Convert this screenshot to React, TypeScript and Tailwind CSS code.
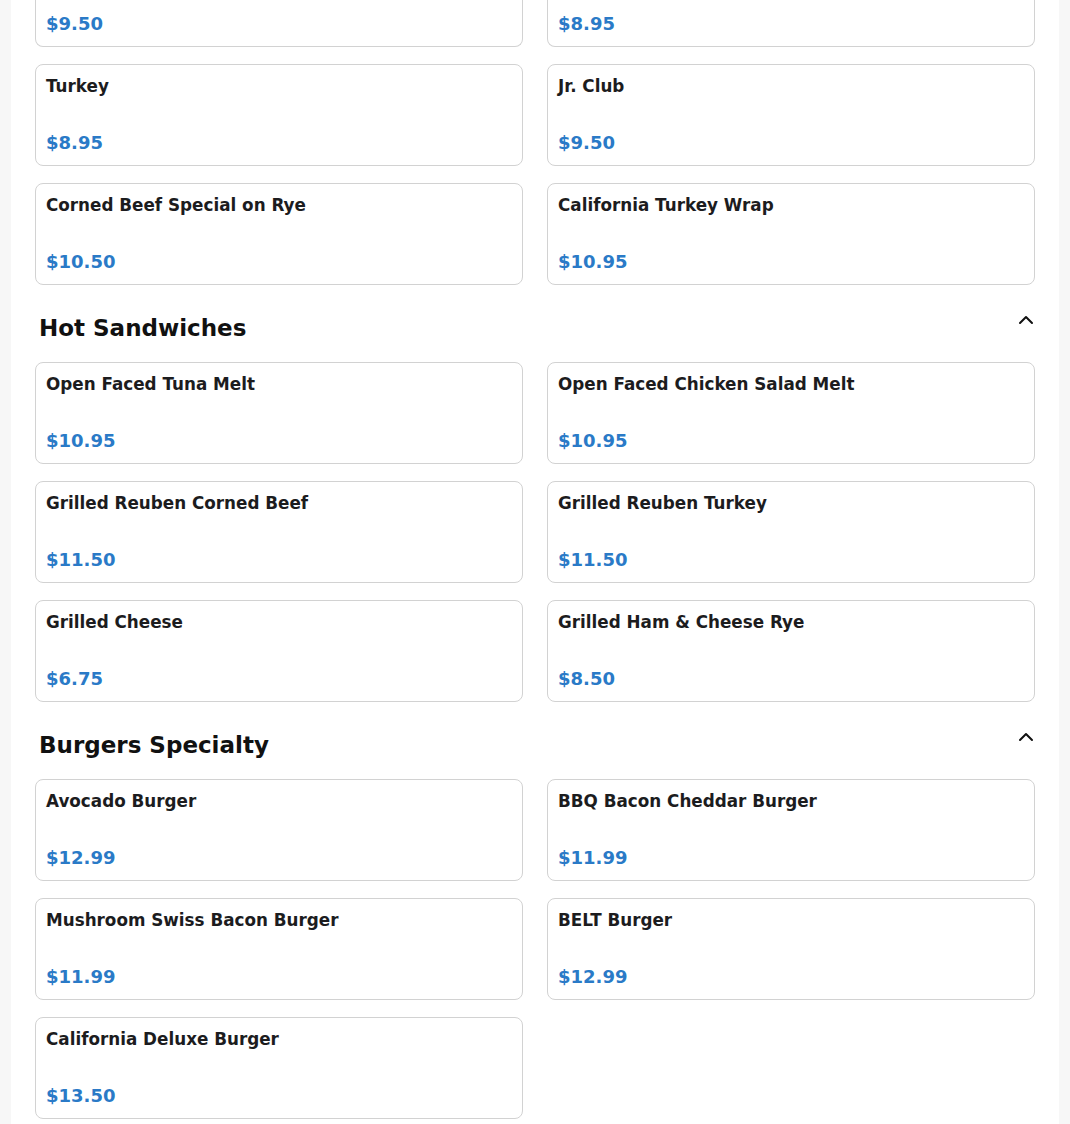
import { ChevronUp } from 'lucide-react';

interface Item {
  name: string;
  price: string;
}

interface Section {
  title?: string;
  items: Item[];
}

// first section is scrolled partly out of view; its heading and first row are cut off
const cutRow: Item[] = [
  { name: '', price: '$9.50' },
  { name: '', price: '$8.95' },
];

const sections: Section[] = [
  {
    items: [
      { name: 'Turkey', price: '$8.95' },
      { name: 'Jr. Club', price: '$9.50' },
      { name: 'Corned Beef Special on Rye', price: '$10.50' },
      { name: 'California Turkey Wrap', price: '$10.95' },
    ],
  },
  {
    title: 'Hot Sandwiches',
    items: [
      { name: 'Open Faced Tuna Melt', price: '$10.95' },
      { name: 'Open Faced Chicken Salad Melt', price: '$10.95' },
      { name: 'Grilled Reuben Corned Beef', price: '$11.50' },
      { name: 'Grilled Reuben Turkey', price: '$11.50' },
      { name: 'Grilled Cheese', price: '$6.75' },
      { name: 'Grilled Ham & Cheese Rye', price: '$8.50' },
    ],
  },
  {
    title: 'Burgers Specialty',
    items: [
      { name: 'Avocado Burger', price: '$12.99' },
      { name: 'BBQ Bacon Cheddar Burger', price: '$11.99' },
      { name: 'Mushroom Swiss Bacon Burger', price: '$11.99' },
      { name: 'BELT Burger', price: '$12.99' },
      { name: 'California Deluxe Burger', price: '$13.50' },
    ],
  },
];

function Price({ value }: { value: string }) {
  return <p className="text-[18px] leading-[27px] font-bold text-[#2a7ac7]">{value}</p>;
}

function MenuCard({ item }: { item: Item }) {
  return (
    <div className="h-[102px] flex flex-col justify-between bg-white border border-[#d2d2d2] rounded-lg px-[10px] pt-[9px] pb-[9px]">
      <p className="text-[16.8px] leading-[25px] font-bold text-[#1c1c1e]">{item.name}</p>
      <Price value={item.price} />
    </div>
  );
}

export default function App() {
  return (
    <div className="min-h-screen bg-[#f7f7f7]" style={{ fontFamily: '"DejaVu Sans", "Liberation Sans", sans-serif' }}>
      <div className="w-[1048px] mx-auto bg-white min-h-screen px-[24px] pb-4">
        <div className="grid grid-cols-2 gap-x-[24px] gap-y-[17px]">
          {cutRow.map((item) => (
            <div
              key={item.price}
              className="h-[47px] flex flex-col justify-end bg-white border border-t-0 border-[#d2d2d2] rounded-b-lg px-[10px] pb-[9px]"
            >
              <Price value={item.price} />
            </div>
          ))}
          {sections[0].items.map((item) => (
            <MenuCard key={item.name} item={item} />
          ))}
        </div>

        {sections.slice(1).map((section) => (
          <div key={section.title}>
            <div className="flex items-start justify-between pl-[4px] pt-[30px] pb-[20px]">
              <h2 className="text-[23px] leading-[27px] font-bold text-[#111111]">{section.title}</h2>
              <ChevronUp size={24} strokeWidth={2} className="text-[#111111] -mr-[3px] -mt-[7px]" />
            </div>
            <div className="grid grid-cols-2 gap-x-[24px] gap-y-[17px]">
              {section.items.map((item) => (
                <MenuCard key={item.name} item={item} />
              ))}
            </div>
          </div>
        ))}
      </div>
    </div>
  );
}
